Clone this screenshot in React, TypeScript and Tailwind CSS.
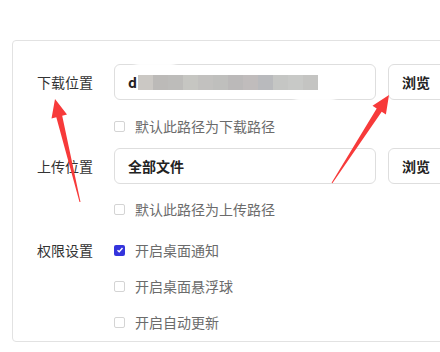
import { useState } from "react"

const mosaic = ["#cbc8c4", "#bcbab8", "#bdbcba", "#c6c6c2", "#c2c1bf", "#bfbfbd", "#bbb9b9", "#c0bcbc", "#b9babd", "#c5c6c4", "#c8c9c7", "#c4c4c2"]

const Checkbox = ({ checked, label, onToggle }: { checked: boolean, label: string, onToggle: () => void }) => {
  return (
    <label className="flex items-center h-[20px] cursor-pointer" onClick={onToggle}>
      <span
        className={
          checked
            ? "w-[11px] h-[11px] rounded-[2px] bg-[#3434dc] flex items-center justify-center"
            : "w-[11px] h-[11px] rounded-[2px] border border-[#d4d4d4] bg-white"
        }
      >
        {checked && (
          <svg width="8" height="8" viewBox="0 0 8 8">
            <path d="M1.5 4.2 L3.2 5.8 L6.5 2" stroke="white" strokeWidth="1.4" fill="none" />
          </svg>
        )}
      </span>
      <span className="ml-[10px] text-[14px] text-[#6b6b6b]">{label}</span>
    </label>
  )
}

export default function App() {
  const [checks, setChecks] = useState([false, false, true, false, false])

  const toggle = (i: number) => {
    setChecks((prev) => prev.map((c, idx) => (idx === i ? !c : c)))
  }

  return (
    <div
      className="relative w-[440px] h-[352px] bg-white overflow-hidden"
      style={{ fontFamily: '"Noto Sans CJK SC", "Noto Sans", sans-serif' }}
    >
      <div className="ml-[12px] mt-[40px] w-[460px] border border-[#e2e2e2] rounded-[4px] pt-[23px] pb-[9px] pl-[24px]">
        {/* 下载位置 */}
        <div className="flex items-center h-[36px]">
          <div className="w-[77px] text-[14px] text-[#333]">下载位置</div>
          <div className="relative w-[262px] h-[36px] border border-[#dedede] rounded-[6px] flex items-center pl-[13px]">
            <span className="text-[14px] font-bold text-[#222]">d</span>
            <div className="flex h-[15px] ml-[1px] blur-[0.4px]">
              {mosaic.map((c, i) => (
                <div key={i} className="w-[15px] h-full" style={{ background: c }} />
              ))}
            </div>
            <div className="absolute left-[20px] top-[-4px] w-[40px] h-[8px] rounded-full bg-white blur-[2px]" />
            <div className="absolute left-[180px] bottom-[-4px] w-[40px] h-[8px] rounded-full bg-white blur-[2px]" />
          </div>
          <button className="ml-[12px] h-[36px] w-[60px] border border-[#dedede] rounded-[6px] text-left pl-[13px] text-[14px] font-bold text-[#222]">
            浏览
          </button>
        </div>
        <div className="ml-[77px] mt-[16px]">
          <Checkbox checked={checks[0]} label="默认此路径为下载路径" onToggle={() => toggle(0)} />
        </div>

        {/* 上传位置 */}
        <div className="flex items-center h-[36px] mt-[12px]">
          <div className="w-[77px] text-[14px] text-[#333]">上传位置</div>
          <div className="w-[262px] h-[36px] border border-[#dedede] rounded-[6px] flex items-center pl-[13px]">
            <span className="text-[14px] font-bold text-[#222]">全部文件</span>
          </div>
          <button className="ml-[12px] h-[36px] w-[60px] border border-[#dedede] rounded-[6px] text-left pl-[13px] text-[14px] font-bold text-[#222]">
            浏览
          </button>
        </div>
        <div className="ml-[77px] mt-[15px]">
          <Checkbox checked={checks[1]} label="默认此路径为上传路径" onToggle={() => toggle(1)} />
        </div>

        {/* 权限设置 */}
        <div className="flex mt-[21px]">
          <div className="w-[77px] h-[20px] flex items-center text-[14px] text-[#333]">权限设置</div>
          <div className="flex flex-col gap-[16px]">
            <Checkbox checked={checks[2]} label="开启桌面通知" onToggle={() => toggle(2)} />
            <Checkbox checked={checks[3]} label="开启桌面悬浮球" onToggle={() => toggle(3)} />
            <Checkbox checked={checks[4]} label="开启自动更新" onToggle={() => toggle(4)} />
          </div>
        </div>
      </div>

      {/* annotation arrows */}
      <svg className="absolute left-0 top-0 pointer-events-none" width="440" height="352">
        <polygon
          fill="#f73a3a"
          points="55,99 67,114.6 62.2,115.8 80.5,201.9 79.5,202.1 56.3,117.2 51.5,118.4"
        />
        <polygon
          fill="#f73a3a"
          points="389,95 385.9,114.5 381.7,111.7 332.4,183.3 331.6,182.7 376.7,108.5 372.5,105.7"
        />
      </svg>
    </div>
  )
}
